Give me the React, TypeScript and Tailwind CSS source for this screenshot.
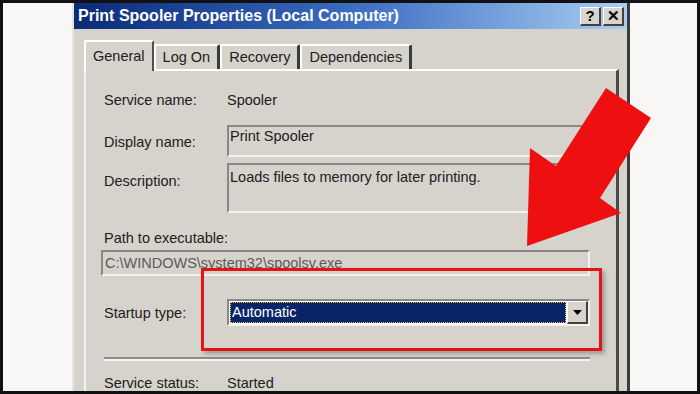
import React from 'react'

const FONT = 'font-["Liberation_Sans",Arial,sans-serif]'

function Sunken({ className, children }: { className?: string; children?: React.ReactNode }) {
  return (
    <div className={`border-t-2 border-l-2 border-t-[#8a8884] border-l-[#8a8884] border-b-2 border-r-2 border-b-[#f4f3f0] border-r-[#f4f3f0] ${className ?? ''}`}>
      {children}
    </div>
  )
}

function TitleButton({ children }: { children: React.ReactNode }) {
  return (
    <div className="w-[21px] h-[19px] bg-[#d8d5cf] border-t border-l border-t-white border-l-white border-b-2 border-r-2 border-b-[#404040] border-r-[#404040] flex items-center justify-center text-[15px] font-bold leading-none text-black">
      {children}
    </div>
  )
}

function Tab({ label, selected }: { label: string; selected?: boolean }) {
  if (selected) {
    return (
      <div className="h-[31px] px-[7px] flex items-center bg-[#d6d3cd] border-t-2 border-l-2 border-t-white border-l-white border-r-2 border-r-[#505050] -mb-[2px] z-10 rounded-t-[2px]">
        {label}
      </div>
    )
  }
  return (
    <div className="h-[25px] px-[7px] flex items-center border-t-2 border-l-2 border-t-white border-l-white border-r-[3px] border-r-[#3a3a3a] rounded-t-[2px]">
      {label}
    </div>
  )
}

export default function App() {
  return (
    <div className={`relative w-[700px] h-[394px] overflow-hidden border-[3px] border-[#111] bg-[#f8f7f5] ${FONT} text-[#202020]`}>
      <div className="ml-[69px] w-[558px] h-[400px] bg-[#d6d3cd] border-l-2 border-l-[#e6e4df] border-r-[3px] border-r-[#3c3c3c]">
        {/* title bar */}
        <div className="h-[26px] flex items-center justify-between bg-gradient-to-r from-[#0b2a78] via-[#3a6cc0] to-[#a9cdf2] pl-[4px] pr-[3px]">
          <span className="text-white text-[16px] font-bold">Print Spooler Properties (Local Computer)</span>
          <div className="flex gap-[2px] items-center">
            <TitleButton>?</TitleButton>
            <TitleButton>✕</TitleButton>
          </div>
        </div>

        <div className="pl-[10px] pr-[8px] pt-[11px]">
          {/* tabs */}
          <div className="flex items-end text-[14.5px] h-[29px]">
            <Tab label="General" selected />
            <Tab label="Log On" />
            <Tab label="Recovery" />
            <Tab label="Dependencies" />
          </div>

          {/* panel */}
          <div className="h-[330px] border-t-2 border-l-2 border-t-white border-l-[#f2f1ee] border-r-[3px] border-r-[#4a4a4a] pl-[18px] pr-[26px] text-[14.5px] leading-[17px]">
            <div className="grid grid-cols-[123px_1fr]">
              <div className="h-[54px] pt-[4px] flex items-center">Service name:</div>
              <div className="h-[54px] pt-[4px] flex items-center">Spooler</div>

              <div className="h-[32px] flex items-center pt-[2px]">Display name:</div>
              <Sunken className="h-[32px] px-[1px] pt-[1px]">Print Spooler</Sunken>

              <div className="h-[50px] mt-[6px] pt-[10px]">Description:</div>
              <Sunken className="h-[50px] mt-[6px] px-[1px] pt-[4px]">Loads files to memory for later printing.</Sunken>
            </div>

            <div className="mt-[17px]">Path to executable:</div>
            <Sunken className="-ml-[3px] mt-[3px] h-[26px] flex items-center pl-[2px] text-[#5a5a5a]">
              C:\WINDOWS\system32\spoolsv.exe
            </Sunken>

            <div className="grid grid-cols-[123px_1fr] items-center mt-[23px]">
              <div className="pt-[1px]">Startup type:</div>
              <Sunken className="h-[27px] bg-white flex items-stretch border-b-[#e8e6e2] border-r-[#e8e6e2]">
                <div className="flex-1 bg-white p-[1px]">
                  <div className="h-full bg-[#0a246a] text-white flex items-center pl-[2px] outline-1 outline-dotted outline-[#f0c040] -outline-offset-1">Automatic</div>
                </div>
                <div className="w-[21px] bg-[#d8d5cf] border-t border-l border-t-white border-l-white border-b-2 border-r-2 border-b-[#404040] border-r-[#404040] flex items-center justify-center">
                  <svg width="9" height="5" viewBox="0 0 9 5"><path d="M0 0h9L4.5 5z" fill="#000" /></svg>
                </div>
              </Sunken>
            </div>

            <div className="mt-[31px] h-[4px] border-t-2 border-t-[#8e8c88] border-b-2 border-b-[#f4f3f0]" />

            <div className="grid grid-cols-[123px_1fr] mt-[14px]">
              <div>Service status:</div>
              <div>Started</div>
            </div>
          </div>
        </div>
      </div>

      {/* red highlight box */}
      <div className="absolute left-[198px] top-[265px] w-[401px] h-[83px] border-[3px] border-[#e21414] shadow-[3px_3px_4px_rgba(0,0,0,0.25)]" />

      {/* red arrow */}
      <svg className="absolute left-0 top-0" width="700" height="394" viewBox="0 0 700 394">
        <polygon points="603,85 648,115 597,195 618,210 524,243 527,145 553,163" fill="#ee1010" />
      </svg>
    </div>
  )
}
